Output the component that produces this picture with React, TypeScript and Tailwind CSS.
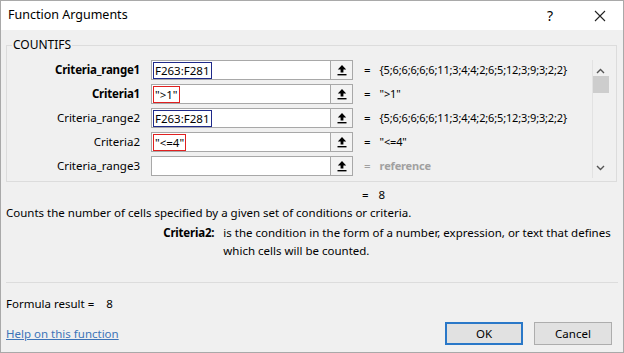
import React from "react";

const font = { fontFamily: '"Noto Sans", "Open Sans", sans-serif' };

function UpIcon() {
  return (
    <svg width="12" height="12" viewBox="0 0 12 12">
      <path d="M6 1 L1.8 5.4 H4.6 V8.6 H7.4 V5.4 H10.2 Z" fill="#000" />
      <rect x="1.5" y="10" width="9" height="1.4" fill="#000" />
    </svg>
  );
}

type Row = { label: string; bold?: boolean; value?: string; box?: "blue" | "red"; eq: string; gray?: boolean };

const rows: Row[] = [
  { label: "Criteria_range1", bold: true, value: "F263:F281", box: "blue", eq: "{5;6;6;6;6;6;11;3;4;4;2;6;5;12;3;9;3;2;2}" },
  { label: "Criteria1", bold: true, value: '">1"', box: "red", eq: '">1"' },
  { label: "Criteria_range2", value: "F263:F281", box: "blue", eq: "{5;6;6;6;6;6;11;3;4;4;2;6;5;12;3;9;3;2;2}" },
  { label: "Criteria2", value: '"<=4"', box: "red", eq: '"<=4"' },
  { label: "Criteria_range3", eq: "reference", gray: true },
];

export default function App() {
  return (
    <div className="w-[624px] h-[353px] border border-[#a9a9a9] bg-[#f0f0f0] flex flex-col text-[11.5px] text-black overflow-hidden" style={font}>
      <div className="h-[29px] bg-white flex items-center pl-[7px] pr-[17px] shrink-0">
        <span className="text-[12.5px]">Function Arguments</span>
        <span className="ml-auto text-[14px] mr-[41px]">?</span>
        <svg width="12" height="12" viewBox="0 0 12 12">
          <path d="M1 1 L11 11 M11 1 L1 11" stroke="#222" strokeWidth="1.1" />
        </svg>
      </div>
      <div className="flex flex-col px-[5px] pt-[15px]">
        <div className="relative border border-[#dcdcdc] h-[137px] w-[611px] pt-[14px] flex">
          <span className="absolute left-[5px] top-[-9px] bg-[#f0f0f0] px-[1px] leading-[16px] text-[12px]">COUNTIFS</span>
          <div className="flex flex-col gap-[4px] w-[584px]">
            {rows.map((r) => (
              <div key={r.label} className="flex items-center h-[20px]">
                <div className={`w-[133px] text-right ${r.bold ? "font-bold tracking-[-0.2px]" : ""}`}>{r.label}</div>
                <div className="ml-[11px] w-[202px] h-[20px] border border-[#a8a8a8] bg-white flex items-center">
                  <div className="flex-1 pl-[1px] flex items-center">
                    {r.value && (
                      <span className={`border ${r.box === "blue" ? "border-[#1f2a8a]" : "border-[#e02020]"} h-[17px] leading-[15px] px-[1px]`}>
                        {r.value}
                      </span>
                    )}
                  </div>
                  <div className="w-[23px] h-[20px] border border-[#a8a8a8] bg-[#f3f3f3] flex items-center justify-center mr-[-1px]">
                    <UpIcon />
                  </div>
                </div>
                <span className={`ml-[11px] ${r.gray ? "text-[#a0a0a0]" : ""}`}>=</span>
                <span className={`ml-[9px] text-[11px] tracking-[-0.15px] ${r.gray ? "text-[#a0a0a0] font-bold" : ""}`}>{r.eq}</span>
              </div>
            ))}
          </div>
          <div className="ml-[1px] w-[16px] h-[118px] border-l border-[#e2e2e2] flex flex-col items-center">
            <svg width="9" height="6" viewBox="0 0 9 6" className="mt-[8px]">
              <path d="M1 5 L4.5 1.5 L8 5" stroke="#555" strokeWidth="1.4" fill="none" />
            </svg>
            <div className="w-[16px] h-[17px] bg-[#cdcdcd] mt-[2px]" />
            <svg width="9" height="6" viewBox="0 0 9 6" className="mt-auto mb-[7px]">
              <path d="M1 1 L4.5 4.5 L8 1" stroke="#555" strokeWidth="1.4" fill="none" />
            </svg>
          </div>
        </div>
        <div className="h-[18px] mt-[4px] flex items-center">
          <span className="ml-[356px]">=</span>
          <span className="ml-[10px]">8</span>
        </div>
        <div className="h-[18px] flex items-center">Counts the number of cells specified by a given set of conditions or criteria.</div>
        <div className="flex mt-[2px] leading-[18px]">
          <div className="w-[209px] text-right font-bold tracking-[-0.2px]">Criteria2:</div>
          <div className="ml-[9px] w-[396px]">
            is the condition in the form of a number, expression, or text that defines which cells will be counted.
          </div>
        </div>
        <div className="mt-[22px] border-t border-[#dcdcdc] w-[612px]" />
        <div className="h-[18px] mt-[12px] flex items-center">
          <span>Formula result =</span>
          <span className="ml-[12px]">8</span>
        </div>
        <div className="flex items-center mt-[9px]">
          <span className="text-[#3d74b8] underline">Help on this function</span>
          <div className="ml-auto mr-[6px] flex gap-[11px]">
            <div className="w-[78px] h-[23px] border-2 border-[#2a78c8] bg-[#e1e1e1] flex items-center justify-center">OK</div>
            <div className="w-[78px] h-[23px] border border-[#adadad] bg-[#e1e1e1] flex items-center justify-center">Cancel</div>
          </div>
        </div>
      </div>
    </div>
  );
}
